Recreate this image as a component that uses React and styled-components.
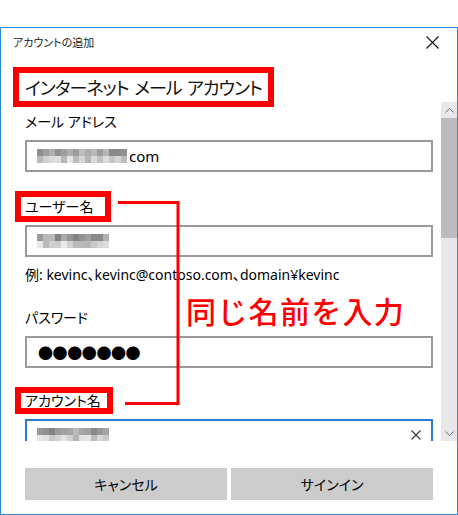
import styled, { createGlobalStyle } from 'styled-components';

const GlobalStyle = createGlobalStyle`
  html, body {
    margin: 0;
    background: #ffffff;
  }
  body {
    font-family: "Noto Sans", "Noto Sans CJK JP", sans-serif;
  }
`;

// deterministic grey mosaic standing in for the blurred-out text
function mosaicCells(seed, cols) {
  const cells = [];
  let h = 0;
  for (let i = 0; i < seed.length; i++) h = (h * 31 + seed.charCodeAt(i)) >>> 0;
  for (let r = 0; r < 2; r++) {
    for (let c = 0; c < cols; c++) {
      h = (h * 1103515245 + 12345) >>> 0;
      const base = r === 0 ? 130 : 180;
      const v = base + ((h >>> 16) % 60);
      cells.push(`rgb(${v},${v},${v})`);
    }
  }
  return cells;
}

function Mosaic({ seed, cols }) {
  return (
    <MosaicGrid $cols={cols}>
      {mosaicCells(seed, cols).map((c, i) => (
        <span key={i} style={{ background: c }} />
      ))}
    </MosaicGrid>
  );
}

function Chevron({ down }) {
  return (
    <svg width="9" height="5" viewBox="0 0 9 5">
      <polyline
        points={down ? '0.5,0.5 4.5,4.5 8.5,0.5' : '0.5,4.5 4.5,0.5 8.5,4.5'}
        fill="none"
        stroke="#707070"
        strokeWidth="1"
      />
    </svg>
  );
}

function Cross({ size, color }) {
  return (
    <svg width={size} height={size} viewBox={`0 0 ${size} ${size}`}>
      <path
        d={`M0.5 0.5 L${size - 0.5} ${size - 0.5} M${size - 0.5} 0.5 L0.5 ${size - 0.5}`}
        stroke={color}
        strokeWidth="1.1"
      />
    </svg>
  );
}

export default function App() {
  return (
    <>
      <GlobalStyle />
      <Window>
        <TitleBar>
          <span>アカウントの追加</span>
          <Cross size={13} color="#111" />
        </TitleBar>

        <Heading>
          <HeadingBox>インターネット メール アカウント</HeadingBox>
        </Heading>

        <ScrollArea>
          <Content>
            <Field $top={0}>
              <Label>メール アドレス</Label>
              <Input>
                <Mosaic seed="mail-address" cols={15} />
                <span>com</span>
              </Input>
            </Field>

            <Field $top={25}>
              <Label $mark $w={96} $h={31} $y={-6}>ユーザー名</Label>
              <Input>
                <Mosaic seed="user" cols={12} />
              </Input>
            </Field>

            <Hint>例: kevinc、kevinc@contoso.com、domain¥kevinc</Hint>

            <Field $top={23}>
              <Label>パスワード</Label>
              <Input>
                <Dots>●●●●●●●</Dots>
              </Input>
            </Field>

            <Field $top={23}>
              <Label $mark $w={98} $h={27} $y={-4}>アカウント名</Label>
              <Input $focused>
                <Mosaic seed="account" cols={12} />
                <ClearIcon>
                  <Cross size={10} color="#333" />
                </ClearIcon>
              </Input>
            </Field>
          </Content>

          <Scrollbar>
            <Arrow>
              <Chevron />
            </Arrow>
            <Thumb />
            <Track />
            <Arrow>
              <Chevron down />
            </Arrow>
          </Scrollbar>
        </ScrollArea>

        <Footer>
          <Button>キャンセル</Button>
          <Button>サインイン</Button>
        </Footer>

        <Connector width="200" height="380" viewBox="0 0 200 380">
          <polyline
            points="117,174.5 177,174.5 177,375.5 124,375.5"
            fill="none"
            stroke="#ff0000"
            strokeWidth="3"
          />
        </Connector>
        <Callout>同じ名前を入力</Callout>
      </Window>
    </>
  );
}

const Window = styled.div`
  position: relative;
  box-sizing: border-box;
  width: 458px;
  height: 488px;
  margin-top: 27px;
  border: 1px solid #2b8ad9;
  display: flex;
  flex-direction: column;
  color: #000;
  font-feature-settings: "palt";
`;

const TitleBar = styled.div`
  height: 28px;
  box-sizing: border-box;
  padding: 0 18px 0 12px;
  display: flex;
  align-items: center;
  justify-content: space-between;
  font-size: 11px;
  color: #222;
`;

const Heading = styled.div`
  height: 46px;
  box-sizing: border-box;
  padding: 11px 0 0 12px;
`;

const HeadingBox = styled.span`
  display: inline-block;
  border: 6px solid #ff0000;
  padding: 2px 6px 0 6px;
  font-size: 18px;
  line-height: 26px;
  letter-spacing: -1px;
  word-spacing: 2px;
  color: #111;
  white-space: nowrap;
`;

const ScrollArea = styled.div`
  height: 339px;
  display: flex;
  overflow: hidden;
`;

const Content = styled.div`
  flex: 1;
  padding: 10px 8px 0 24px;
  overflow: hidden;
`;

const Field = styled.div`
  display: flex;
  flex-direction: column;
  align-items: flex-start;
  margin-top: ${(p) => p.$top}px;
`;

const Label = styled.label`
  position: relative;
  font-size: 14px;
  line-height: 20px;
  margin-bottom: 8px;

  ${(p) =>
    p.$mark &&
    `
    &::before {
      content: '';
      position: absolute;
      left: -10px;
      top: ${p.$y}px;
      width: ${p.$w}px;
      height: ${p.$h}px;
      box-sizing: border-box;
      border: 6px solid #ff0000;
    }
  `}
`;

const Input = styled.div`
  align-self: stretch;
  height: 32px;
  box-sizing: border-box;
  border: 2px solid ${(p) => (p.$focused ? '#2b7bd4' : '#999999')};
  padding: 0 10px;
  display: flex;
  align-items: center;
  gap: 2px;
  font-size: 15px;
`;

const MosaicGrid = styled.div`
  display: grid;
  grid-template-columns: repeat(${(p) => p.$cols}, 6px);
  grid-auto-rows: 7px;
`;

const ClearIcon = styled.span`
  margin-left: auto;
  display: flex;
`;

const Dots = styled.span`
  font-family: "Noto Sans CJK JP", sans-serif;
  font-feature-settings: normal;
  font-size: 15px;
  letter-spacing: -0.4px;
  padding-left: 1px;
`;

const Hint = styled.div`
  margin-top: 8px;
  font-size: 14px;
  line-height: 20px;
  white-space: nowrap;
`;

const Scrollbar = styled.div`
  width: 16px;
  background: #e8e8e8;
  display: flex;
  flex-direction: column;
`;

const Arrow = styled.div`
  height: 16px;
  display: flex;
  align-items: center;
  justify-content: center;
`;

const Thumb = styled.div`
  height: 120px;
  background: #bcbcbc;
`;

const Track = styled.div`
  flex: 1;
`;

const Footer = styled.div`
  flex: 1;
  padding: 27px 24px 0 24px;
  display: grid;
  grid-template-columns: 1fr 1fr;
  column-gap: 4px;
  align-items: start;
`;

const Button = styled.button`
  height: 32px;
  border: none;
  background: #cccccc;
  font-family: inherit;
  font-feature-settings: "palt";
  font-size: 14px;
  color: #000;
`;

const Connector = styled.svg`
  position: absolute;
  left: 0;
  top: 0;
  pointer-events: none;
`;

const Callout = styled.div`
  position: absolute;
  left: 185px;
  top: 267px;
  font-family: "Noto Sans CJK JP", sans-serif;
  font-feature-settings: normal;
  font-size: 30px;
  line-height: 30px;
  font-weight: 500;
  letter-spacing: 1.3px;
  color: #ff0000;
  white-space: nowrap;
`;
